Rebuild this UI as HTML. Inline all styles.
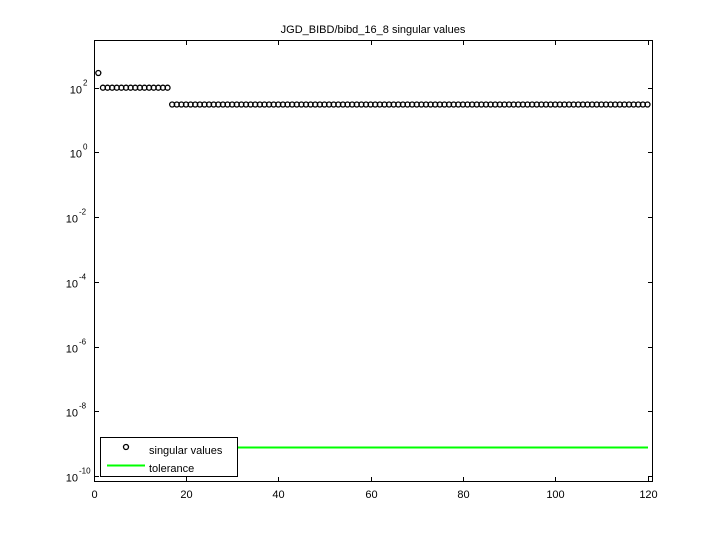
<!DOCTYPE html>
<html><head><style>body{margin:0;background:#fff}svg{display:block}text{font-family:"Liberation Sans",sans-serif;fill:#000}</style></head>
<body>
<svg id="s" width="720" height="540" xmlns="http://www.w3.org/2000/svg">
<rect width="720" height="540" fill="#fff"/>
<text x="373" y="33" font-size="11" text-anchor="middle">JGD_BIBD/bibd_16_8 singular values</text>
<g id="ticks" stroke="#000" stroke-width="1"></g>
<line x1="100" y1="447.5" x2="648" y2="447.5" stroke="#00ff00" stroke-width="2"/>
<g id="pts" fill="none" stroke="#000" stroke-width="1.3"></g>
<rect x="100.5" y="437.5" width="137" height="39" fill="#fff" stroke="#000"/>
<circle cx="126" cy="447" r="2.5" fill="none" stroke="#000" stroke-width="1.3"/>
<text x="149" y="454" font-size="11">singular values</text>
<line x1="107" y1="465.5" x2="145" y2="465.5" stroke="#00ff00" stroke-width="2"/>
<text x="149" y="472" font-size="11">tolerance</text>
<rect x="94.5" y="40.5" width="558" height="441" fill="none" stroke="#000"/>
<g id="lab" font-size="11"></g>
</svg>
<script>
var ns="http://www.w3.org/2000/svg",t=document.getElementById("ticks"),p=document.getElementById("pts"),l=document.getElementById("lab");
function el(g,n,a,txt){var e=document.createElementNS(ns,n);for(var k in a)e.setAttribute(k,a[k]);if(txt)e.textContent=txt;g.appendChild(e);}
function X(i){return 93.7+i*4.615;}
for(var v=0;v<=120;v+=20){var x=Math.round(X(v))+0.5;el(t,"line",{x1:x,y1:481,x2:x,y2:477});el(t,"line",{x1:x,y1:41,x2:x,y2:45});el(l,"text",{x:x,y:498,"text-anchor":"middle"},String(v));}
for(var d=2;d>=-10;d-=2){var y=Math.round(87.7+(2-d)/2*64.7)+0.5;el(t,"line",{x1:95,y1:y,x2:99,y2:y});el(t,"line",{x1:652,y1:y,x2:648,y2:y});
el(l,"text",{x:d<0?78:82,y:y+5,"text-anchor":"end"},"10");el(l,"text",{x:d<0?79:83,y:y-3,"font-size":"8"},String(d));}
for(var i=1;i<=120;i++){var y=i==1?73:(i<=16?87.7:104.5);el(p,"circle",{cx:X(i),cy:y,r:2.5});}
</script>
</body></html>
